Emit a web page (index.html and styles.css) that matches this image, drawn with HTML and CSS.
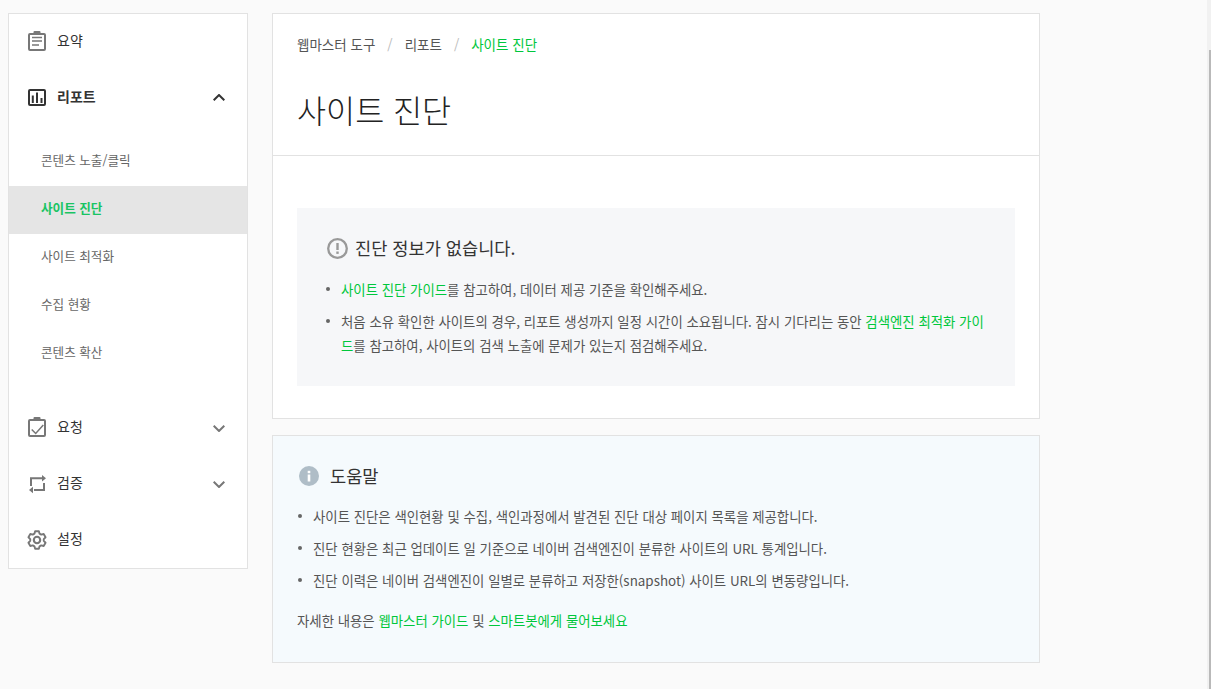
FILE: index.html
```html
<!DOCTYPE html>
<html lang="ko">
<head>
<meta charset="utf-8">
<title>사이트 진단</title>
<link rel="stylesheet" href="styles.css">
</head>
<body>
<div class="layout">
  <nav class="side">
    <a class="nav-row top">
      <svg class="ic" viewBox="0 0 20 20" fill="none" stroke="#777" stroke-width="2"><rect x="1" y="3" width="16" height="16" rx="1"/><rect x="5.500" y="0" width="7" height="4" rx="1" fill="#777" stroke="none"/><path d="M4 6.500h10M4 10h10M4 14h7" stroke-width="1.600"/></svg>
      <span class="nav-label">요약</span>
    </a>
    <a class="nav-row open">
      <svg class="ic" viewBox="0 0 20 20" fill="none" stroke="#333" stroke-width="2"><rect x="1" y="3" width="16" height="15" rx="1"/><path d="M4.800 16V8.500M9 16V5.500M13.500 16v-5"/></svg>
      <span class="nav-label">리포트</span>
      <svg class="chev up" viewBox="0 0 12 7" fill="none" stroke="#333" stroke-width="2"><path d="M.7 6.300 6 1l5.300 5.300"/></svg>
    </a>
    <ul class="sub">
      <li>콘텐츠 노출/클릭</li>
      <li class="on">사이트 진단</li>
      <li>사이트 최적화</li>
      <li>수집 현황</li>
      <li>콘텐츠 확산</li>
    </ul>
    <a class="nav-row">
      <svg class="ic" viewBox="0 0 20 20" fill="none" stroke="#777" stroke-width="2"><rect x="1" y="3" width="16" height="16" rx="1"/><rect x="5.500" y="0" width="7" height="4" rx="1" fill="#777" stroke="none"/><path d="m3.700 12.500 4 4 7.600-8.500" stroke-width="1.500"/></svg>
      <span class="nav-label">요청</span>
      <svg class="chev down" viewBox="0 0 12 7" fill="none" stroke="#777" stroke-width="2"><path d="M.7.700 6 6l5.300-5.300"/></svg>
    </a>
    <a class="nav-row">
      <svg class="ic" viewBox="0 0 20 20" fill="none" stroke="#777" stroke-width="2"><path d="M3 13V5.300h11"/><path d="M16 10v7H6"/><path d="m14 2 4 3.300-4 3.300z" fill="#777" stroke="none"/><path d="m5 13.700-4 3.300 4 3.300z" fill="#777" stroke="none"/></svg>
      <span class="nav-label">검증</span>
      <svg class="chev down" viewBox="0 0 12 7" fill="none" stroke="#777" stroke-width="2"><path d="M.7.700 6 6l5.300-5.300"/></svg>
    </a>
    <a class="nav-row">
      <svg class="ic" viewBox="0 0 20 20" fill="none" stroke="#777" stroke-width="2.100" stroke-linejoin="round"><circle cx="9" cy="11" r="3.200"/><path transform="translate(9 11) scale(.9) translate(-9 -12)" d="M6.920 2.220h4.160l.77 2.730 1.830 1.060 2.750-.7 2.080 3.600-1.990 2.030v2.120l1.990 2.030-2.080 3.600-2.750-.7-1.830 1.060-.77 2.730H6.920l-.77-2.730-1.830-1.060-2.750.7-2.080-3.600 1.990-2.030v-2.120L-.51 8.910l2.080-3.600 2.750.7 1.830-1.060z"/></svg>
      <span class="nav-label">설정</span>
    </a>
  </nav>
  <main class="main">
    <section class="card">
      <header class="head">
        <div class="crumbs">
          <span>웹마스터 도구</span><i>/</i><span>리포트</span><i>/</i><span class="green">사이트 진단</span>
        </div>
        <h1>사이트 진단</h1>
      </header>
      <div class="body">
        <div class="notice">
          <h2>
            <svg class="warn" viewBox="0 0 21 21"><circle cx="10.500" cy="10.500" r="9.300" fill="none" stroke="#999" stroke-width="2.300"/><rect x="9.300" y="5" width="2.400" height="7" fill="#999"/><rect x="9.300" y="13.500" width="2.400" height="2.400" fill="#999"/></svg>
            진단 정보가 없습니다.
          </h2>
          <ul class="list">
            <li><a class="green">사이트 진단 가이드</a>를 참고하여, 데이터 제공 기준을 확인해주세요.</li>
            <li>처음 소유 확인한 사이트의 경우, 리포트 생성까지 일정 시간이 소요됩니다. 잠시 기다리는 동안 <a class="green">검색엔진 최적화 가이드</a>를 참고하여, 사이트의 검색 노출에 문제가 있는지 점검해주세요.</li>
          </ul>
        </div>
      </div>
    </section>
    <section class="help">
      <h2>
        <svg class="info" viewBox="0 0 20 20"><circle cx="10" cy="10" r="10" fill="#afbdc7"/><rect x="8.700" y="8.500" width="2.600" height="7" fill="#fff"/><rect x="8.700" y="4.800" width="2.600" height="2.400" fill="#fff"/></svg>
        도움말
      </h2>
      <ul class="list help-list">
        <li>사이트 진단은 색인현황 및 수집, 색인과정에서 발견된 진단 대상 페이지 목록을 제공합니다.</li>
        <li>진단 현황은 최근 업데이트 일 기준으로 네이버 검색엔진이 분류한 사이트의 URL 통계입니다.</li>
        <li>진단 이력은 네이버 검색엔진이 일별로 분류하고 저장한(snapshot) 사이트 URL의 변동량입니다.</li>
      </ul>
      <p class="more">자세한 내용은 <a class="green">웹마스터 가이드</a> 및 <a class="green">스마트봇에게 물어보세요</a></p>
    </section>
  </main>
</div>
<div class="scroll"><div class="thumb"></div></div>
</body>
</html>
```
FILE: styles.css
```css
* { box-sizing: border-box; }
html, body { height: 100%; }
body {
  margin: 0;
  background: #fafafa;
  color: #555;
  font-family: "Noto Sans CJK KR", "Noto Sans", sans-serif;
  font-size: 13.400px;
  overflow: hidden;
}
.layout {
  display: flex;
  align-items: flex-start;
  gap: 24px;
  padding: 13px 0 0 8px;
}
.side {
  width: 240px;
  background: #fff;
  border: 1px solid #e2e2e2;
  padding-bottom: 1px;
}
.nav-row {
  display: flex;
  align-items: center;
  height: 56px;
  padding: 0 22px 0 19px;
  color: #333;
  font-size: 14px;
}
.nav-row.top { height: 54px; }
.nav-row.open { height: 58px; }
.nav-row.open .nav-label { font-weight: 700; color: #333; }
.nav-label { margin-left: 9px; padding-bottom: 2px; flex: 1; }
.ic { width: 20px; height: 20px; display: block; overflow: visible; }
.chev { width: 12px; height: 7px; display: block; }
.chev.up { margin-top: 1px; }
.chev.down { margin-top: 2px; }
.sub {
  list-style: none;
  margin: 12px 0 21px;
  padding: 0;
  font-size: 12.600px;
}
.sub li {
  height: 48px;
  line-height: 44px;
  padding-left: 32px;
  color: #666;
}
.sub li.on {
  background: #e5e5e5;
  color: #19c463;
  font-weight: 700;
}
.main {
  width: 768px;
  display: flex;
  flex-direction: column;
  gap: 16px;
}
.card, .help { border: 1px solid #e2e2e2; }
.card { background: #fff; }
.head {
  height: 142px;
  padding: 20px 24px 0;
  border-bottom: 1px solid #e2e2e2;
}
.crumbs {
  display: flex;
  align-items: center;
  height: 20px;
  color: #555;
  font-size: 13.500px;
}
.crumbs i {
  font-style: normal;
  color: #bbb;
  margin: 0 12px;
}
.green { color: #00c73c; }
h1 {
  margin: 32px 0 0;
  font-size: 31.600px;
  font-weight: 300;
  line-height: 46px;
  color: #222;
}
.body { padding: 52px 24px 32px; }
.notice {
  height: 178px;
  background: #f6f7f9;
  padding: 26px 30px 0 29px;
}
.notice h2, .help h2 {
  display: flex;
  align-items: center;
  margin: 0;
  font-size: 17.600px;
  font-weight: 400;
  color: #333;
  line-height: 28px;
}
.warn { width: 21px; height: 21px; margin: 0 7px 0 1px; }
.list {
  list-style: none;
  margin: 15px 0 0;
  padding: 0 0 0 15px;
  line-height: 24px;
  word-break: break-all;
}
.list li { position: relative; margin-bottom: 8px; }
.list li::before {
  content: "";
  position: absolute;
  left: -15px;
  top: 10px;
  width: 4px;
  height: 4px;
  border-radius: 50%;
  background: #666;
}
.help {
  height: 228px;
  background: #f5fafd;
  padding: 26px 24px 0;
}
.info { width: 20px; height: 20px; margin: 0 11px 0 2px; }
.list.help-list { margin-top: 14px; padding-left: 16px; }
.more { margin: 16px 0 0; line-height: 24px; }
.scroll {
  position: fixed;
  right: 0;
  top: 0;
  bottom: 0;
  width: 4px;
  background: #f1f1f1;
}
.thumb {
  position: absolute;
  right: 0;
  top: 50px;
  bottom: 0;
  width: 2px;
  background: #b9b9b9;
}
```
